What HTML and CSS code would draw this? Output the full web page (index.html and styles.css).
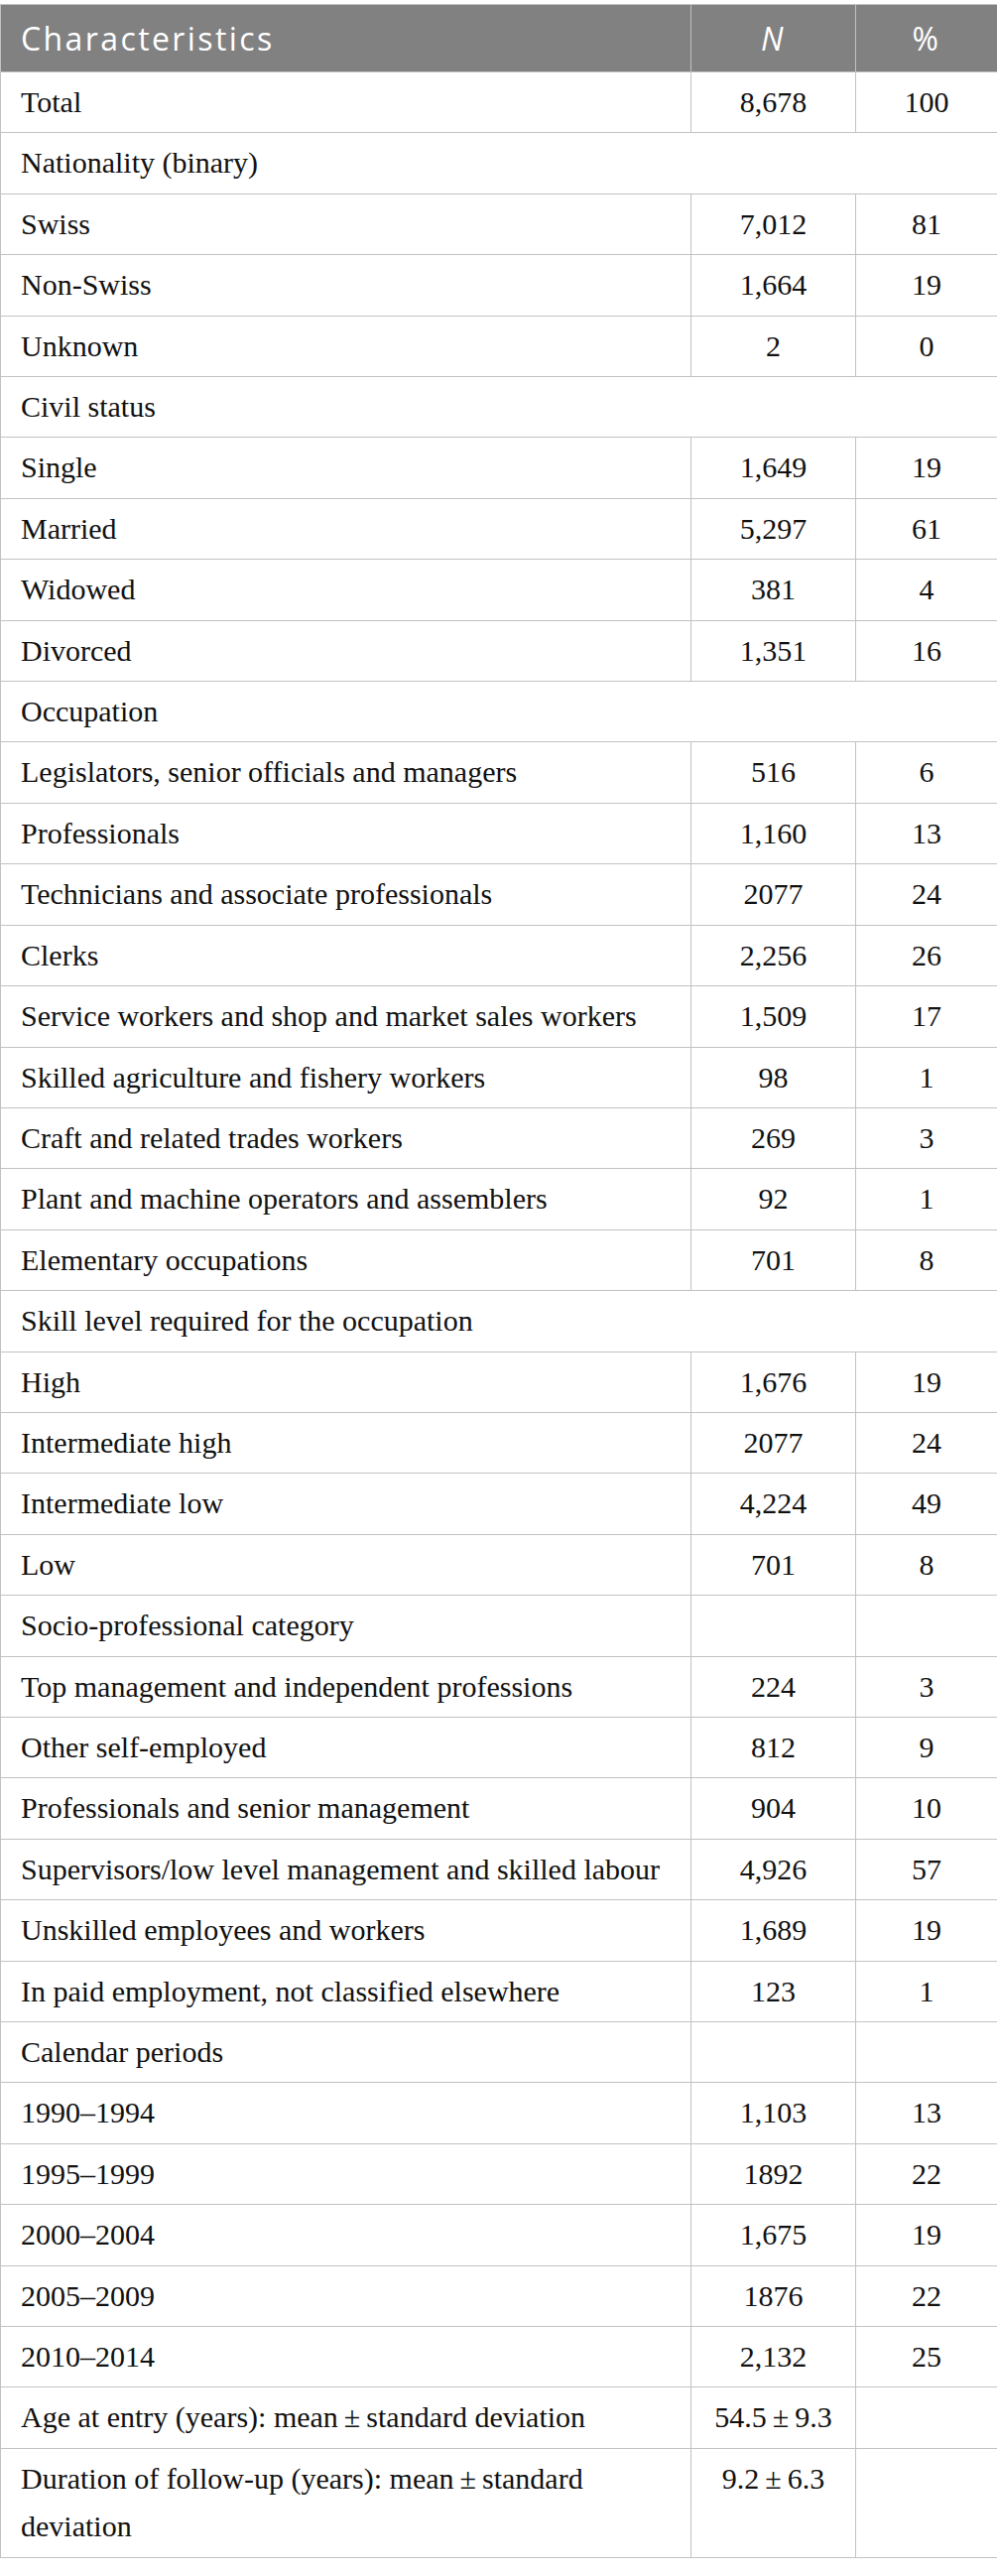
FILE: index.html
```html
<!DOCTYPE html>
<html lang="en">
<head>
<meta charset="utf-8">
<title>Characteristics</title>
<link rel="stylesheet" href="styles.css">
</head>
<body>
<table class="tbl">
  <colgroup>
    <col class="c1">
    <col class="c2">
    <col class="c3">
  </colgroup>
  <thead>
    <tr>
      <th class="left">Characteristics</th>
      <th class="num"><i>N</i></th>
      <th class="num">%</th>
    </tr>
  </thead>
  <tbody>
    <tr><td>Total</td><td class="num">8,678</td><td class="num">100</td></tr>
    <tr><td colspan="3">Nationality (binary)</td></tr>
    <tr><td>Swiss</td><td class="num">7,012</td><td class="num">81</td></tr>
    <tr><td>Non-Swiss</td><td class="num">1,664</td><td class="num">19</td></tr>
    <tr><td>Unknown</td><td class="num">2</td><td class="num">0</td></tr>
    <tr><td colspan="3">Civil status</td></tr>
    <tr><td>Single</td><td class="num">1,649</td><td class="num">19</td></tr>
    <tr><td>Married</td><td class="num">5,297</td><td class="num">61</td></tr>
    <tr><td>Widowed</td><td class="num">381</td><td class="num">4</td></tr>
    <tr><td>Divorced</td><td class="num">1,351</td><td class="num">16</td></tr>
    <tr><td colspan="3">Occupation</td></tr>
    <tr><td>Legislators, senior officials and managers</td><td class="num">516</td><td class="num">6</td></tr>
    <tr><td>Professionals</td><td class="num">1,160</td><td class="num">13</td></tr>
    <tr><td>Technicians and associate professionals</td><td class="num">2077</td><td class="num">24</td></tr>
    <tr><td>Clerks</td><td class="num">2,256</td><td class="num">26</td></tr>
    <tr><td>Service workers and shop and market sales workers</td><td class="num">1,509</td><td class="num">17</td></tr>
    <tr><td>Skilled agriculture and fishery workers</td><td class="num">98</td><td class="num">1</td></tr>
    <tr><td>Craft and related trades workers</td><td class="num">269</td><td class="num">3</td></tr>
    <tr><td>Plant and machine operators and assemblers</td><td class="num">92</td><td class="num">1</td></tr>
    <tr><td>Elementary occupations</td><td class="num">701</td><td class="num">8</td></tr>
    <tr><td colspan="3">Skill level required for the occupation</td></tr>
    <tr><td>High</td><td class="num">1,676</td><td class="num">19</td></tr>
    <tr><td>Intermediate high</td><td class="num">2077</td><td class="num">24</td></tr>
    <tr><td>Intermediate low</td><td class="num">4,224</td><td class="num">49</td></tr>
    <tr><td>Low</td><td class="num">701</td><td class="num">8</td></tr>
    <tr><td>Socio-professional category</td><td class="num"></td><td class="num"></td></tr>
    <tr><td>Top management and independent professions</td><td class="num">224</td><td class="num">3</td></tr>
    <tr><td>Other self-employed</td><td class="num">812</td><td class="num">9</td></tr>
    <tr><td>Professionals and senior management</td><td class="num">904</td><td class="num">10</td></tr>
    <tr><td>Supervisors/low level management and skilled labour</td><td class="num">4,926</td><td class="num">57</td></tr>
    <tr><td>Unskilled employees and workers</td><td class="num">1,689</td><td class="num">19</td></tr>
    <tr><td>In paid employment, not classified elsewhere</td><td class="num">123</td><td class="num">1</td></tr>
    <tr><td>Calendar periods</td><td class="num"></td><td class="num"></td></tr>
    <tr><td>1990–1994</td><td class="num">1,103</td><td class="num">13</td></tr>
    <tr><td>1995–1999</td><td class="num">1892</td><td class="num">22</td></tr>
    <tr><td>2000–2004</td><td class="num">1,675</td><td class="num">19</td></tr>
    <tr><td>2005–2009</td><td class="num">1876</td><td class="num">22</td></tr>
    <tr><td>2010–2014</td><td class="num">2,132</td><td class="num">25</td></tr>
    <tr><td>Age at entry (years): mean&#8201;±&#8201;standard deviation</td><td class="num">54.5&#8201;±&#8201;9.3</td><td class="num"></td></tr>
    <tr><td class="wrap">Duration of follow-up (years): mean&#8201;±&#8201;standard deviation</td><td class="num">9.2&#8201;±&#8201;6.3</td><td class="num"></td></tr>
  </tbody>
</table>
</body>
</html>
```

FILE: styles.css
```css
html, body {
  margin: 0;
  padding: 0;
  background: #ffffff;
}

body {
  padding-top: 4px;
}

.tbl {
  width: 1005px;
  table-layout: fixed;
  border-collapse: collapse;
  border: 1px solid #c2c2c2;
}

.c1 { width: 696px; }
.c2 { width: 166px; }
.c3 { width: 143px; }

.tbl th {
  background: #818181;
  color: #ffffff;
  font-family: "Open Sans", "DejaVu Sans", sans-serif;
  font-weight: 400;
  font-size: 32px;
  letter-spacing: 2.4px;
  height: 67px;
  padding: 0 20px;
  border: 1px solid #c2c2c2;
  vertical-align: middle;
}

.tbl th.left {
  text-align: left;
}

.tbl td {
  font-family: "Liberation Serif", "Times New Roman", serif;
  font-size: 30px;
  line-height: 48.4px;
  color: #111111;
  padding: 6px 20px;
  border: 1px solid #c2c2c2;
  vertical-align: top;
  text-align: left;
}

.tbl .num {
  text-align: center;
  padding-left: 6px;
  padding-right: 6px;
}

.tbl td.wrap {
  padding-right: 70px;
}
```
